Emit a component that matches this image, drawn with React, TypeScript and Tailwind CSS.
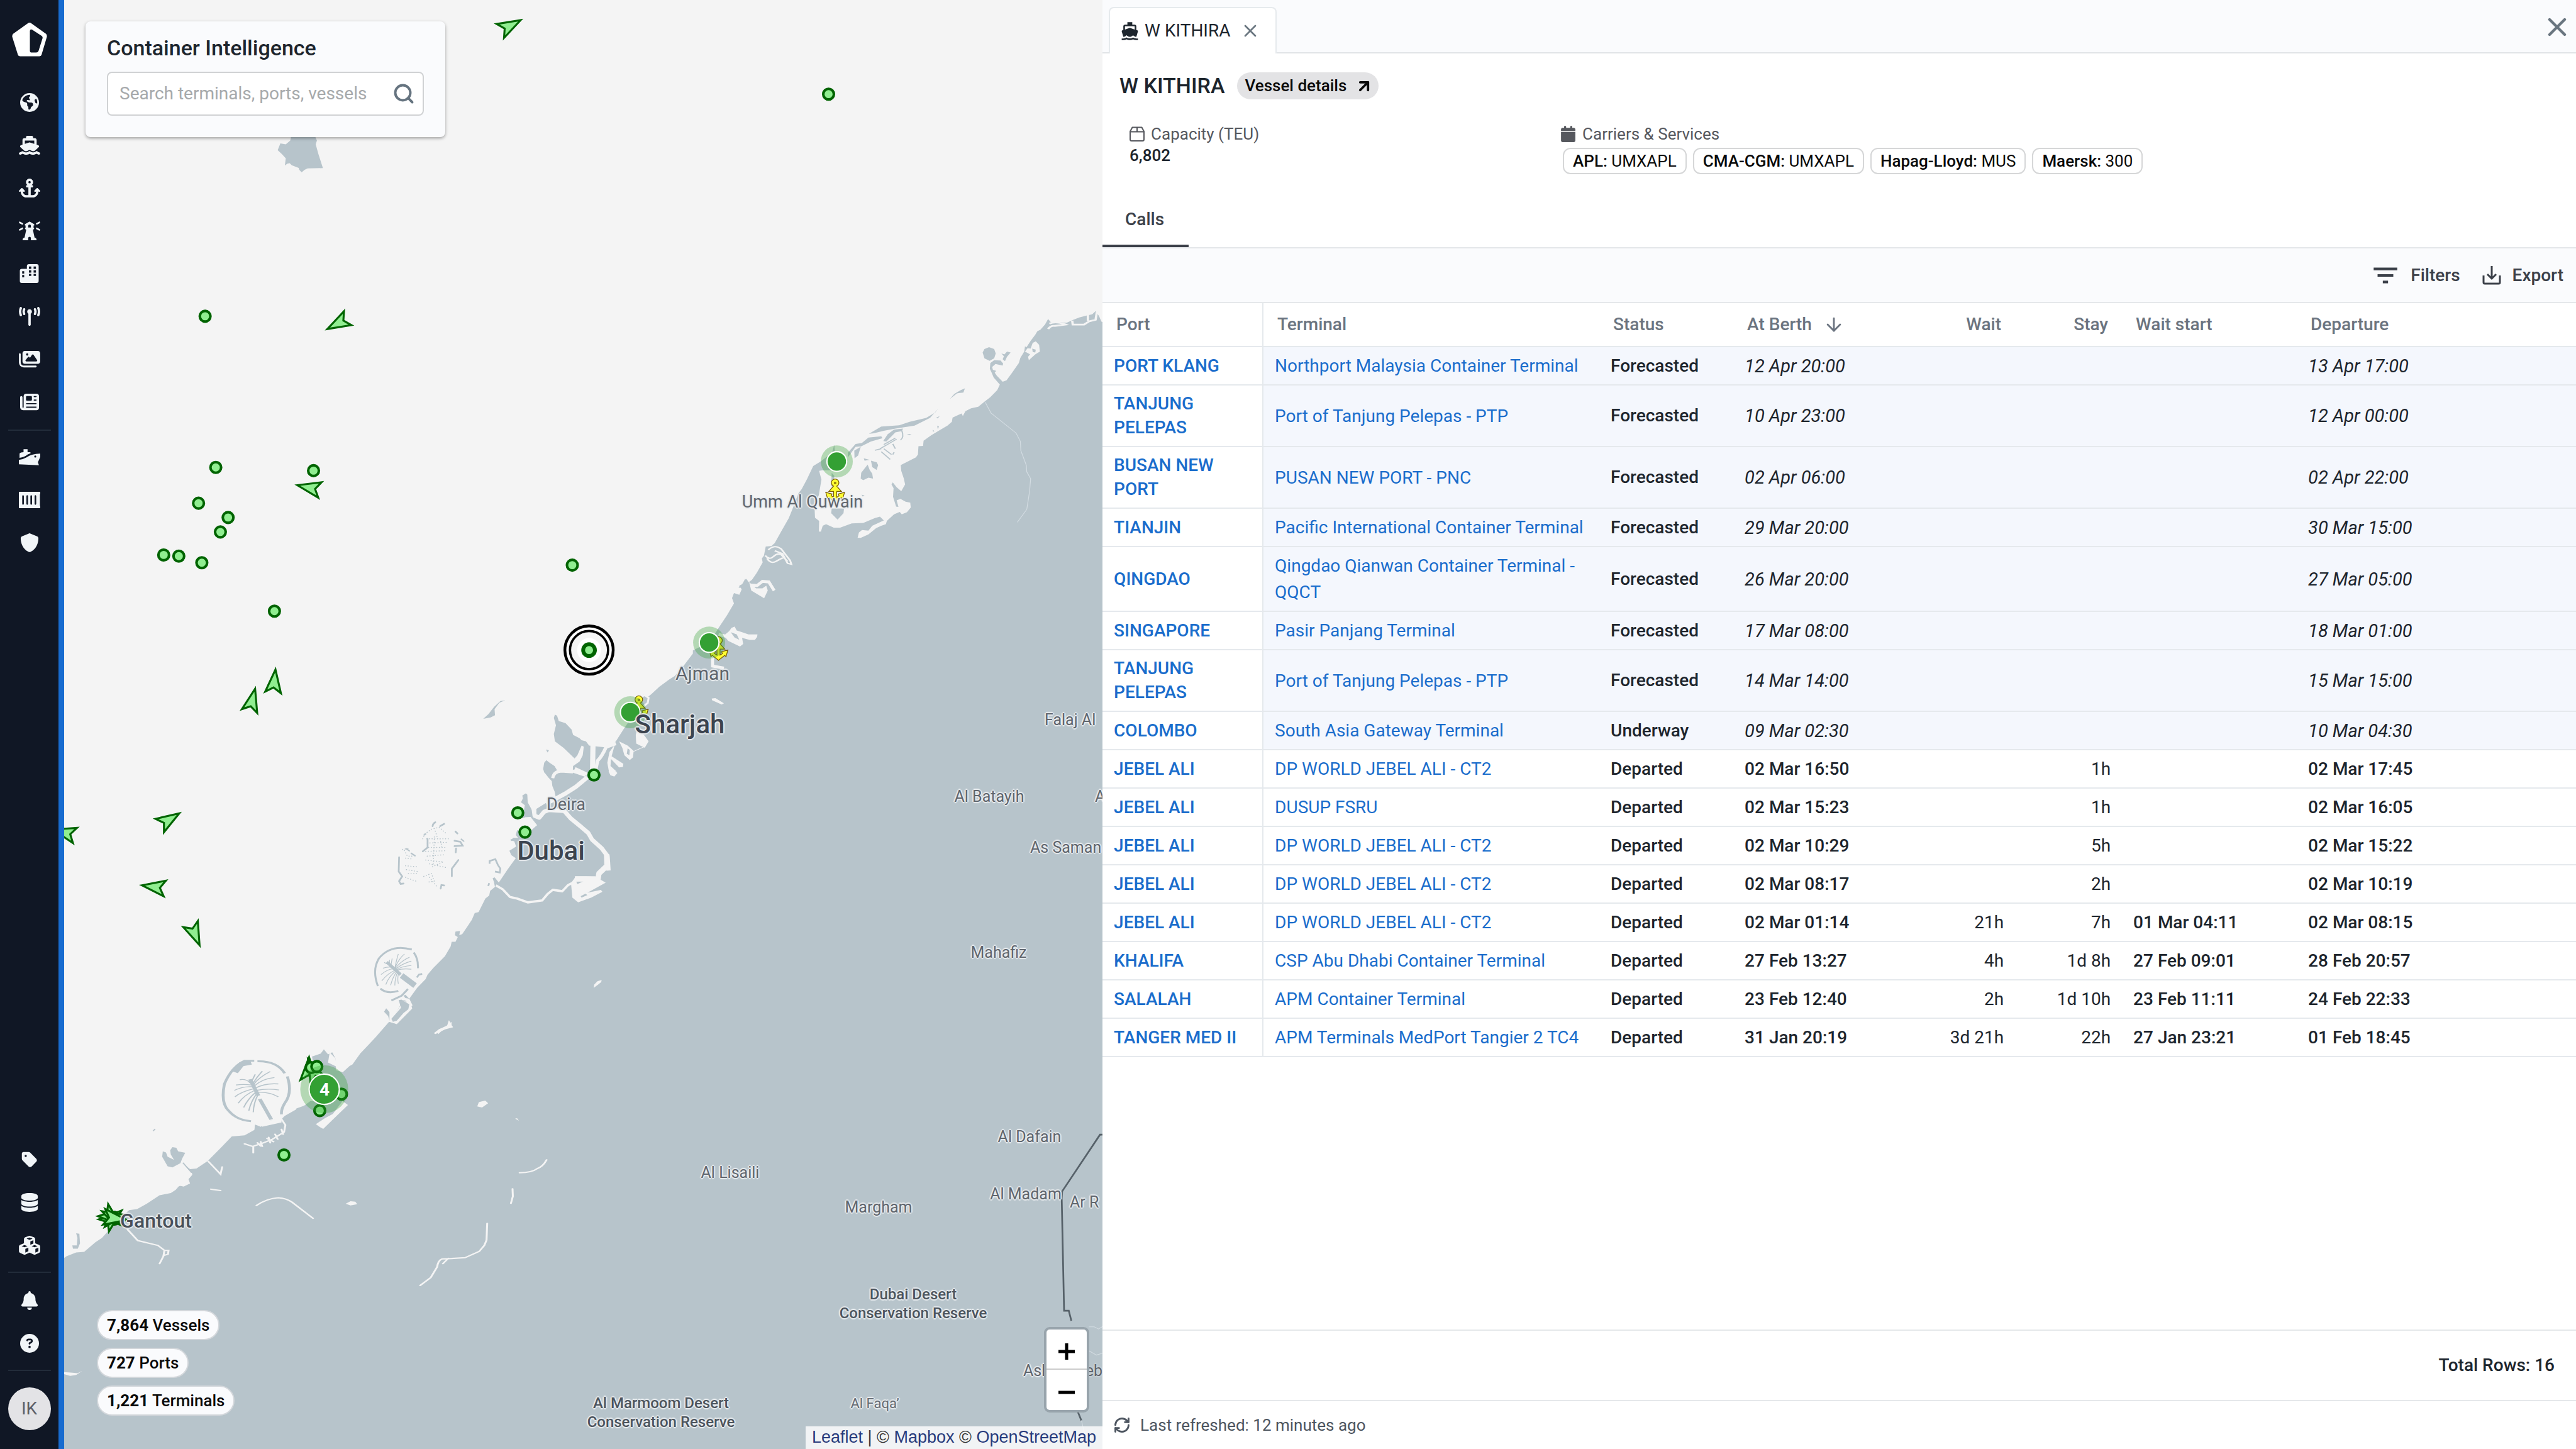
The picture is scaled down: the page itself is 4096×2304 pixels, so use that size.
import { useState } from 'react'
import { ArrowDown, ArrowUpRight, RefreshCw, Search, X } from 'lucide-react'
import {
  FaAnchor,
  FaBell,
  FaCalendar,
  FaCircleQuestion,
  FaCubes,
  FaDatabase,
  FaEarthAmericas,
  FaImages,
  FaNewspaper,
  FaShield,
  FaShip,
  FaTag,
  FaTowerBroadcast,
} from 'react-icons/fa6'
import { MdDirectionsBoat, MdFilterList } from 'react-icons/md'

type Call = {
  port: string
  terminal: string
  status: 'Forecasted' | 'Underway' | 'Departed'
  berth: string
  wait?: string
  stay?: string
  waitStart?: string
  departure: string
}

const calls: Call[] = [
  { port: 'PORT KLANG', terminal: 'Northport Malaysia Container Terminal', status: 'Forecasted', berth: '12 Apr 20:00', departure: '13 Apr 17:00' },
  { port: 'TANJUNG PELEPAS', terminal: 'Port of Tanjung Pelepas - PTP', status: 'Forecasted', berth: '10 Apr 23:00', departure: '12 Apr 00:00' },
  { port: 'BUSAN NEW PORT', terminal: 'PUSAN NEW PORT - PNC', status: 'Forecasted', berth: '02 Apr 06:00', departure: '02 Apr 22:00' },
  { port: 'TIANJIN', terminal: 'Pacific International Container Terminal', status: 'Forecasted', berth: '29 Mar 20:00', departure: '30 Mar 15:00' },
  { port: 'QINGDAO', terminal: 'Qingdao Qianwan Container Terminal - QQCT', status: 'Forecasted', berth: '26 Mar 20:00', departure: '27 Mar 05:00' },
  { port: 'SINGAPORE', terminal: 'Pasir Panjang Terminal', status: 'Forecasted', berth: '17 Mar 08:00', departure: '18 Mar 01:00' },
  { port: 'TANJUNG PELEPAS', terminal: 'Port of Tanjung Pelepas - PTP', status: 'Forecasted', berth: '14 Mar 14:00', departure: '15 Mar 15:00' },
  { port: 'COLOMBO', terminal: 'South Asia Gateway Terminal', status: 'Underway', berth: '09 Mar 02:30', departure: '10 Mar 04:30' },
  { port: 'JEBEL ALI', terminal: 'DP WORLD JEBEL ALI - CT2', status: 'Departed', berth: '02 Mar 16:50', stay: '1h', departure: '02 Mar 17:45' },
  { port: 'JEBEL ALI', terminal: 'DUSUP FSRU', status: 'Departed', berth: '02 Mar 15:23', stay: '1h', departure: '02 Mar 16:05' },
  { port: 'JEBEL ALI', terminal: 'DP WORLD JEBEL ALI - CT2', status: 'Departed', berth: '02 Mar 10:29', stay: '5h', departure: '02 Mar 15:22' },
  { port: 'JEBEL ALI', terminal: 'DP WORLD JEBEL ALI - CT2', status: 'Departed', berth: '02 Mar 08:17', stay: '2h', departure: '02 Mar 10:19' },
  { port: 'JEBEL ALI', terminal: 'DP WORLD JEBEL ALI - CT2', status: 'Departed', berth: '02 Mar 01:14', wait: '21h', stay: '7h', waitStart: '01 Mar 04:11', departure: '02 Mar 08:15' },
  { port: 'KHALIFA', terminal: 'CSP Abu Dhabi Container Terminal', status: 'Departed', berth: '27 Feb 13:27', wait: '4h', stay: '1d 8h', waitStart: '27 Feb 09:01', departure: '28 Feb 20:57' },
  { port: 'SALALAH', terminal: 'APM Container Terminal', status: 'Departed', berth: '23 Feb 12:40', wait: '2h', stay: '1d 10h', waitStart: '23 Feb 11:11', departure: '24 Feb 22:33' },
  { port: 'TANGER MED II', terminal: 'APM Terminals MedPort Tangier 2 TC4', status: 'Departed', berth: '31 Jan 20:19', wait: '3d 21h', stay: '22h', waitStart: '27 Jan 23:21', departure: '01 Feb 18:45' },
]

const services = [
  { carrier: 'APL', code: 'UMXAPL' },
  { carrier: 'CMA-CGM', code: 'UMXAPL' },
  { carrier: 'Hapag-Lloyd', code: 'MUS' },
  { carrier: 'Maersk', code: '300' },
]

const totals = [
  { count: '7,864', label: 'Vessels' },
  { count: '727', label: 'Ports' },
  { count: '1,221', label: 'Terminals' },
]

/* ---------- icons ---------- */

function Logo() {
  return (
    <svg viewBox="0 0 106 102" className="h-[54px] w-[56px]" aria-hidden="true">
      <path
        fill="#fff"
        fillRule="evenodd"
        d="M48 2Q53 -2 58 2L103 34Q106 38 105 43L89 97Q88 101 83 101H24Q19 101 18 97L1 43Q0 38 3 34ZM54 25Q54 18 61 21L90 40Q93 43 92 47L80 85Q78 90 73 90H60Q54 90 54 84Z"
      />
    </svg>
  )
}

function LighthouseIcon() {
  return (
    <svg viewBox="0 0 64 56" className="h-[30px] w-[34px]" aria-hidden="true">
      <path
        fill="currentColor"
        fillRule="evenodd"
        d="M32 0L46 8V12H44V19L46 22L42 25L47 48Q53 49 53 56H36V50Q36 46 32 46T28 50V56H11Q11 49 17 48L22 25L18 22L20 19V12H18V8ZM32 9Q28 9 28 13V18H36V13Q36 9 32 9Z"
      />
      <g stroke="currentColor" strokeWidth="5">
        <path d="M1 2L12 8M1 26L12 20M63 2L52 8M63 26L52 20" />
      </g>
    </svg>
  )
}

function BuildingsIcon() {
  return (
    <svg viewBox="0 0 58 56" className="h-[30px] w-[31px]" aria-hidden="true">
      <path
        fill="currentColor"
        fillRule="evenodd"
        d="M22 6Q22 0 28 0H51Q57 0 57 6V50Q57 56 51 56H7Q1 56 1 50V20Q1 14 7 14H22ZM8 21V28H14V21ZM8 32V39H14V32ZM28 7V14H35V7ZM42 7V14H49V7ZM28 18V25H35V18ZM42 18V25H49V18ZM28 29V35H35V29ZM42 29V35H49V29Z"
      />
    </svg>
  )
}

function CargoShipIcon() {
  return (
    <svg viewBox="0 0 64 48" className="h-[26px] w-[34px]" aria-hidden="true">
      <path fill="currentColor" d="M2 26V13Q5 9 14 9V0H26V9H33Q36 9 35 12L26 16Q16 24 2 26Z" />
      <path
        fill="currentColor"
        fillRule="evenodd"
        d="M0 32Q14 30 24 24Q36 14 64 13V23L57 39L60 48L0 45ZM49 19A3 3 0 1 0 49.1 25A3 3 0 1 0 49 19Z"
      />
    </svg>
  )
}

function ContainerIcon() {
  return (
    <svg viewBox="0 0 64 49" className="h-[26px] w-[34px]" aria-hidden="true">
      <path
        fill="currentColor"
        fillRule="evenodd"
        d="M0 0H64V7H63V42H64V49H0ZM10 12V37L12.500 39L15 37V12L12.500 10ZM22.500 12V37L25 39L27.500 37V12L25 10ZM34.500 12V37L37 39L39.500 37V12L37 10ZM47 12V37L49.500 39L52 37V12L49.500 10Z"
      />
    </svg>
  )
}

function BoxIcon() {
  return (
    <svg viewBox="0 0 24 24" className="h-6 w-6" fill="none" stroke="currentColor" strokeWidth="2" strokeLinejoin="round" aria-hidden="true">
      <path d="M1 8L4.500 1.500H19.500L23 8V20.500Q23 23 20.500 23H3.500Q1 23 1 20.500ZM1 8.500H23M12 1.500V8" />
    </svg>
  )
}

function ExportIcon() {
  return (
    <svg viewBox="0 0 30 30" className="h-[30px] w-[30px]" fill="none" stroke="currentColor" strokeWidth="3" aria-hidden="true">
      <path d="M2 15V26Q2 28 4 28H26Q28 28 28 26V15M15 0V20M8 13L15 20L22 13" />
    </svg>
  )
}

const navTop = [
  { label: 'World', icon: <FaEarthAmericas className="h-[30px] w-[30px]" /> },
  { label: 'Vessels', icon: <FaShip className="h-[30px] w-[34px]" /> },
  { label: 'Anchorages', icon: <FaAnchor className="h-[30px] w-[34px]" /> },
  { label: 'Lighthouses', icon: <LighthouseIcon /> },
  { label: 'Companies', icon: <BuildingsIcon /> },
  { label: 'Signals', icon: <FaTowerBroadcast className="h-[30px] w-[34px]" /> },
  { label: 'Imagery', icon: <FaImages className="h-[30px] w-[34px]" /> },
  { label: 'News', icon: <FaNewspaper className="h-[30px] w-[30px]" /> },
]

const navMiddle = [
  { label: 'Cargo', icon: <CargoShipIcon /> },
  { label: 'Containers', icon: <ContainerIcon /> },
  { label: 'Risk', icon: <FaShield className="h-[30px] w-[30px]" /> },
]

const navData = [
  { label: 'Tags', icon: <FaTag className="h-[28px] w-[28px]" /> },
  { label: 'Data', icon: <FaDatabase className="h-[30px] w-[28px]" /> },
  { label: 'Modules', icon: <FaCubes className="h-[30px] w-[34px]" /> },
]

const navHelp = [
  { label: 'Notifications', icon: <FaBell className="h-[30px] w-[28px]" /> },
  { label: 'Help', icon: <FaCircleQuestion className="h-[30px] w-[30px]" /> },
]

function NavGroup({ items }: { items: { label: string; icon: React.ReactNode }[] }) {
  return (
    <ul>
      {items.map((item) => (
        <li key={item.label}>
          <button type="button" aria-label={item.label} className="flex h-[68px] w-[68px] items-center justify-center">
            {item.icon}
          </button>
        </li>
      ))}
    </ul>
  )
}

function Sidebar() {
  return (
    <nav className="flex w-[102px] shrink-0 flex-col items-center border-r-[9px] border-[#176bcf] bg-[#101725] pt-9 pb-[30px] text-[#f1f5f8]">
      <Logo />
      <div className="mt-[39px]">
        <NavGroup items={navTop} />
      </div>
      <hr className="mt-[10px] mb-2 w-[68px] border-t-2 border-[#222c3a]" />
      <NavGroup items={navMiddle} />
      <div className="mt-auto">
        <NavGroup items={navData} />
      </div>
      <hr className="mt-2 mb-[10px] w-[68px] border-t-2 border-[#222c3a]" />
      <NavGroup items={navHelp} />
      <hr className="mt-2 mb-[26px] w-[68px] border-t-2 border-[#222c3a]" />
      <button type="button" className="flex h-[68px] w-[68px] items-center justify-center rounded-full bg-[#e3e3e6] text-[28px] text-[#5d5f68]">
        IK
      </button>
    </nav>
  )
}

/* ---------- map ---------- */

const LAND = '#b7c4cb'
const SEA = '#f4f4f4'

const vessels = [
  [504.5, 57.3], [125, 192.5], [131.5, 284.5], [191, 286.5], [121, 306.3], [139, 315], [134.3, 323.8],
  [99.8, 337.8], [109, 338.5], [123, 342.5], [348.5, 344], [167.2, 372], [361.7, 471.7], [315.3, 494.8],
  [319.7, 506.5], [194.8, 676], [208, 666], [173, 703],
]

// x, y, heading
const moving = [
  [310, 16, 62], [206.5, 196.5, 242], [189, 297, 282], [167, 415.5, 6], [153.5, 427, 14], [102.5, 499.3, 58],
  [94.5, 540, 278], [118.5, 568, 157], [40, 507, 285],
  [188, 651.5, 2], [191, 652, 335], [68, 742, 50], [67.5, 740.5, 130], [69, 741, 80], [69.5, 741.5, 98],
]

const clusters = [
  [509.5, 280.9],
  [431.8, 391.1],
  [383.8, 433.5],
]

const DART = 'M0 -8L4.8 6L0 3L-4.8 6Z'
const ANCHOR =
  'M-1 -2.200A2.400 2.400 0 1 1 1 -2.200L4 1.200H1V5L2.500 4L2 2.800L6 1.800L4.800 6L4 5.200L0 8.400L-4 5.200L-4.800 6L-6 1.800L-2 2.800L-2.500 4L-1 5V1.200H-4Z'

function Coastline() {
  return (
    <svg
      viewBox="192 0 3096 4320"
      preserveAspectRatio="xMinYMin slice"
      className="absolute inset-0 h-full w-full"
      aria-hidden="true"
    >
      {/* island behind the search card */}
      <g transform="scale(.8929 .574)">
        <path fill={LAND} d="M975 690L1048 690L1059 730L1055 750L1064 800L1079 873L1028 875L1018 882L1008 895L1000 882L998 872L975 858L968 848L960 850L952 860L955 822L942 800L928 780L937 745L955 750L970 730Z" />
      </g>

      {/* Ras Al Khaimah to Al Hamriyah */}
      <g transform="translate(2100 850) scale(.7653 .574)">
        <path
          fill={LAND}
          d="M1568 200L1548 190L1538 160L1525 135L1512 152L1490 158L1462 168L1438 180L1412 196L1372 192L1350 192L1340 176L1328 205L1310 232L1298 240L1290 258L1272 290L1256 322L1250 318L1247 345L1232 378L1226 405L1200 455L1178 495L1163 502L1140 470L1132 455L1138 446L1125 440L1122 425L1135 410L1163 418L1165 408L1155 392L1130 390L1115 405L1113 435L1120 455L1128 480L1152 517L1142 545L1115 582L1092 606L1068 632L1040 640L1018 655L1008 680L1003 667L968 688L965 710L948 730L925 748L885 780L855 808L853 835L835 837L833 880L825 895L766 935L768 965L778 1005L783 1035L768 1070L750 1050L735 1025L730 1035L738 1055L736 1100L748 1150L757 1152L750 1118L765 1110L785 1125L803 1130L805 1155L790 1180L770 1190L762 1178L740 1190L712 1225L708 1242L690 1250L670 1262L640 1295L610 1313L598 1312L603 1285L615 1272L640 1275L655 1250L700 1222L685 1203L665 1210L620 1235L575 1238L530 1260L505 1260L475 1242L462 1250L455 1280L447 1280L448 1225L432 1208L430 1150L447 1090L457 1010L448 965L460 962L510 962L510 870L507 830L498 870L455 915L425 940L400 1010L380 1060L368 1080L345 1160L330 1210L300 1280L275 1340L262 1355L240 1358L233 1405L225 1420L228 1440L205 1495L187 1530L172 1545L160 1525L150 1550L135 1568L135 1572L1568 1572Z"
        />
        <g fill={LAND}>
          <path d="M1085 350L1092 332L1110 322L1130 332L1136 355L1130 380L1112 393L1092 380ZM1158 355L1170 360L1180 345L1194 350L1180 372L1172 395L1163 385L1168 370Z" />
          <path d="M957 592L975 565L1000 545L1016 536L1010 558L985 562ZM912 642L900 662L865 690L800 710L760 728L690 735L642 772L660 770L700 757L745 745L820 730L880 690Z" />
          <path d="M690 785L640 792L615 820L590 825L560 870L560 895L590 840L612 838L650 812L695 795ZM610 840L585 860L586 900L600 885ZM775 745L740 750L715 775L698 810L710 812L745 765L770 758Z" />
          <path d="M637 932L612 975L610 1005L620 1013L640 1000L658 1005L655 980L645 960ZM650 912L672 920L678 935L672 960L655 945ZM622 900L645 908L625 912ZM497 975L507 990L505 1060L495 1040ZM497 1160L545 1160L543 1185L520 1218L495 1185Z" />
          <path d="M613 1088L625 1092L618 1098ZM903 690L918 680L910 692ZM908 730L915 735L910 748ZM790 773L808 775L800 780ZM890 750L897 758L892 762Z" />
        </g>
        <path fill="none" stroke={LAND} strokeWidth="5" d="M700 828L745 795M685 850L750 800M700 850L730 880M690 865L725 905M735 825L745 850M740 868L735 880M665 858L690 850M770 755Q780 790 765 805" />
        <path fill="none" stroke={SEA} strokeWidth="9" d="M1345 200Q1370 185 1408 205L1365 212Q1350 210 1340 228M1434 185L1436 205L1480 205L1500 188L1525 180L1530 140M1495 155V185" />
        <path fill={SEA} fillRule="evenodd" d="M1280 300L1292 292L1305 310L1308 345L1290 360L1265 390L1262 372L1270 360L1250 345L1260 328L1272 330ZM1278 330L1292 335L1290 350L1280 348Z" />
        <path fill="none" stroke={SEA} strokeWidth="7" d="M250 1375Q275 1345 300 1370L335 1430L340 1450L325 1445L305 1395L275 1380M238 1405Q255 1430 270 1410T300 1400L325 1435M245 1420Q260 1450 280 1435T310 1415" />
        <path fill="none" stroke="#d3dce2" strokeWidth="3" d="M1095 608L1118 665L1215 768L1232 812L1234 860L1255 935L1257 970L1272 1005L1268 1070L1257 1165L1220 1232" />
      </g>

      {/* Ajman and Sharjah */}
      <g transform="translate(1400 1700) scale(.6378)">
        <path
          fill={LAND}
          d="M1353 0L1322 45L1308 60L1295 40L1280 68L1262 70L1273 90L1262 115L1237 107L1228 130L1237 155L1205 210L1165 270L1125 335L1045 375L1045 390L1003 445L960 495L935 510L888 545L850 580L835 592L820 580L795 590L770 640L750 700L720 745L685 800L660 822L635 828L605 825L560 820L545 800L525 795L515 785L485 770L478 745L450 715L435 710L418 705L410 680L400 675L395 690L405 725L395 765L400 800L440 830L492 880L505 865L525 820L535 825L530 865L515 895L485 915L483 945L465 950L440 940L410 935L398 915L375 900L360 888L350 900L345 930L351 946L2960 946L2960 0Z"
        />
        <path fill={LAND} d="M168 608L145 612L115 640L90 672L65 695L100 688L120 678L118 650L140 620ZM358 838L372 842L366 852Z" />
        <g fill={SEA}>
          <path d="M1308 55L1318 95L1378 131L1395 95L1388 72L1370 85L1340 85Z" />
          <path fillRule="evenodd" d="M1190 305L1215 285L1225 270L1240 263L1250 282L1275 290L1305 300L1347 300L1345 312L1335 326L1310 326L1275 316L1280 345L1265 357L1210 330ZM1222 290L1250 300L1262 325L1240 315Z" />
          <path d="M1133 600L1150 598L1190 622L1180 628L1135 608ZM785 740L820 775L838 800L820 830L780 810L778 770Z" />
          <path fillRule="evenodd" d="M700 800L740 820L768 845L765 875L750 887L725 865L715 830ZM740 832L736 858L748 865L750 840Z" />
          <path fillRule="evenodd" d="M680 815L665 870L720 905L718 920L700 922L662 882L660 915L692 945L680 965L655 955L645 900L655 850Z" />
        </g>
        <g fill="none" stroke={SEA}>
          <path strokeWidth="14" d="M1315 70L1345 72L1370 52L1400 55L1425 95M1165 300L1205 310M1137 400V448L1190 458" />
          <path strokeWidth="9" d="M800 592L820 584L838 597L834 620L815 636" />
          <path strokeWidth="3" d="M766 848L820 824" />
          <path strokeWidth="24" d="M578 815L576 930" />
          <path strokeWidth="16" d="M640 825Q620 870 600 890L590 935M685 810L630 830M500 938L560 965" />
        </g>
      </g>

      {/* Dubai */}
      <g transform="translate(1000 2300) scale(.574)">
        <path
          fill={LAND}
          d="M1083 0L1108 32L1125 50L1128 75L1140 105L1145 130L1120 150L1100 160L1045 195L1045 212L1030 220L1022 200L1000 160L998 120L990 114L972 125L975 140L965 160L985 175L980 205L960 240L1015 240L1048 280L1020 300L990 320L945 305L938 330L950 345L925 345L912 360L930 362L940 390L905 412L915 435L938 450L895 510L850 577L828 550L818 555L825 575L830 600L805 620L800 645L780 660L765 690L745 730L725 735L710 770L685 808L660 845L645 850L648 828L625 832L622 850L637 860L625 885L605 885L600 908L570 960L510 1020L480 1055L470 1078L425 1125L385 1180L365 1160L355 1165L375 1190L340 1187L338 1215L300 1280L318 1310L280 1300L210 1380L178 1415L130 1465L90 1522L75 1530L40 1562L30 1568L4000 1568L4000 0Z"
        />
        <g fill="none" stroke={SEA} strokeLinejoin="round">
          <path strokeWidth="22" d="M1310 30L1250 80L1200 112L1140 145L1095 165" />
          <path strokeWidth="16" d="M1130 35Q1135 0 1175 -2L1235 2M1180 -20L1300 20M1245 -15L1310 15" />
          <path strokeWidth="22" d="M1028 170L1036 230L1060 240L1085 210L1110 200L1190 205L1225 245L1280 290L1315 320L1335 355L1385 400L1415 440L1420 515" />
          <path strokeWidth="28" d="M1410 430L1412 490L1370 530L1365 560L1300 558L1245 558" />
          <path strokeWidth="12" d="M835 592L870 612L908 652L945 660L1000 680L1075 670L1105 635L1130 615L1180 622L1210 590L1240 575" />
        </g>
        <g fill={SEA}>
          <path d="M985 238L1015 236L1048 278L1020 305L990 290Z" />
          <path fillRule="evenodd" d="M1225 580L1250 545L1350 545L1405 578L1310 630L1380 615L1388 625L1330 655L1262 680L1232 655ZM1252 572L1290 570L1258 585ZM1275 648L1300 635L1310 642L1280 655Z" />
          <path d="M1343 1124L1345 1108L1362 1090L1384 1083L1382 1094L1365 1108ZM590 1293L598 1305L604 1300L605 1320L613 1328L590 1330L555 1345L535 1365L532 1355L512 1360L540 1338L580 1325Z" />
          <path d="M1420 0L1440 -12L1466 8L1450 26L1430 20ZM285 1280L300 1290L395 1212L400 1232L320 1313L285 1300Z" />
        </g>
        <path fill={SEA} d="M345 1185L372 1198L350 1175L385 1180L402 1215L345 1262L320 1290L292 1300L298 1275L340 1215Z" />
        <path fill={LAND} d="M330 1188L345 1185L385 1210L380 1235L355 1255L320 1295L300 1300L292 1285L342 1228ZM265 1230L282 1250L282 1295L275 1270L254 1248Z" />
        <path fill="none" stroke={LAND} strokeWidth="9" d="M802 480L802 465L832 456L845 485L858 505L855 525L830 520M795 595L800 580M912 358L930 350L948 368M424 1070L435 1055L452 1052" />
        {/* Palm Jumeirah */}
        <g fill="none" stroke={LAND}>
          <path strokeWidth="10" d="M222 1115Q190 1030 228 970Q290 895 398 925M408 940Q432 970 430 1022M235 1128Q270 1158 328 1140M378 1130L345 1165L292 1190" />
          <path strokeWidth="16" d="M268 990L340 1055" />
          <path strokeWidth="30" d="M345 1060L415 1112" />
          <path
            strokeWidth="4"
            d="M310 1022Q318 980 328 948M310 1022Q328 975 360 948M312 1024Q340 985 386 965M315 1026Q345 1000 396 985M318 1030Q350 1010 396 1008M320 1032Q350 1022 396 1027M290 1005L296 972M282 998L282 978M312 1022Q285 1010 248 1022M315 1026Q280 1020 238 1055M318 1030Q275 1045 242 1088M320 1033Q280 1060 263 1107M322 1036Q300 1065 288 1110M326 1040Q310 1070 310 1112M330 1045Q322 1075 328 1102M270 1000L255 992"
          />
        </g>
        {/* The World */}
        <g fill="none" stroke={LAND} strokeLinecap="round">
          <path strokeWidth="5" strokeDasharray="1 13" d="M455 350L465 325L500 300L540 290L580 325M475 350H590M478 372L585 368M485 395H580M470 415L570 412M478 440L575 432M470 460L560 470M490 480L580 500M505 495L560 470M460 545L500 530L515 570L480 575M490 550L530 600M360 410L375 440L410 440M365 450L400 455M365 490L425 495M370 510L430 520M380 530L425 530M365 550L420 570M350 405L380 400M520 310L530 340M545 350L555 395M515 340L510 480" />
          <path strokeWidth="9" d="M520 264Q508 270 506 284M545 284L566 272M332 446L330 520L348 545L332 570L340 584L355 582M606 544V505L625 480L640 460M620 360L650 365L662 385L620 388M628 400L626 420M548 608L552 590L566 592M625 312L635 322M480 350V395L455 415" />
          <path strokeWidth="7" d="M370 402L385 412M395 425L415 438M470 325L462 330M655 352L668 362" />
        </g>
      </g>

      {/* Jebel Ali to Ghantoot */}
      <g transform="translate(180 2900) scale(.9566 .6378)">
        <path
          fill={LAND}
          d="M885 468L860 455L858 400L848 372L835 382L822 358L812 378L785 392L790 430L800 600L780 600L760 622L735 635L705 660L690 685L655 690L625 720L608 700L605 735L575 760L535 765L500 820L460 880L425 915L405 918L380 888L412 940L385 990L370 998L360 1015L345 1030L310 1040L270 1080L240 1105L215 1110L185 1150L130 1240L110 1260L75 1305L50 1308L20 1325L0 1348L0 2300L3300 2300L3300 468Z"
        />
        <path fill={LAND} d="M350 815L362 818L368 835L390 842L380 870L375 890L350 910L335 905L318 860L320 835L330 840L335 860L355 875L345 850L343 830ZM50 1218L60 1220L62 1265L55 1290L40 1290L38 1275L52 1275L54 1240Z" />
        <path fill={SEA} d="M880 600L897 618L820 730L810 722L797 708L825 680L850 660ZM840 372L858 400L862 440L835 420ZM608 700L655 690L690 680L690 700L630 720ZM550 755L605 735L607 708L580 700Z" />
        <path fill={SEA} d="M655 690L690 678L735 640L745 600L640 600L620 640L590 700L625 720Z" />
        {/* Palm Jebel Ali */}
        <g fill="none" stroke={LAND}>
          <path strokeWidth="9" d="M605 412L575 412Q535 440 512 520Q500 610 525 645Q550 690 595 694M615 414Q675 412 700 470M708 485Q725 560 700 610Q688 640 690 662" />
          <path strokeWidth="20" d="M595 420L565 428L545 465" />
          <path strokeWidth="12" d="M592 498L618 575M622 590L658 686" />
          <path
            strokeWidth="4"
            d="M600 520Q612 490 630 460M602 525Q618 490 655 462M605 530Q630 495 668 490M608 540Q640 515 680 520M611 550Q645 540 682 548M614 560Q650 555 680 580M598 505L608 475M592 515Q580 495 560 500M597 525Q570 520 548 525M600 533Q570 530 543 550M604 542Q565 555 545 580M607 550Q575 570 555 610M610 558Q585 590 572 630M613 565Q595 600 588 645M616 572Q603 610 602 652"
          />
        </g>
        <g fill="none" stroke={SEA} strokeWidth="6" strokeLinecap="round">
          <path d="M688 680L702 712L698 745L660 780L625 800L600 812L575 800M602 815V842M690 732L695 755M670 755L678 778M650 770L655 795M625 790L630 812M645 775L665 790M615 795L625 810" />
          <path d="M462 882L500 942L505 908M470 1012L500 1018M612 1088Q645 1055 680 1052Q705 1055 722 1072L788 1148M210 1200L242 1252L305 1275L325 1298L322 1325L310 1360M325 1298L338 1298L336 1316L322 1322" />
          <path d="M1432 935Q1470 935 1488 915Q1505 905 1516 875M1410 1010L1411 1045L1405 1078M1331 1172L1329 1250L1322 1275L1306 1303L1262 1332L1220 1336L1190 1338Q1178 1345 1175 1375L1155 1425L1122 1462M1210 1335L1193 1360" />
        </g>
        <path fill={SEA} d="M1300 625L1305 605L1325 598L1334 610L1315 630ZM890 1080L905 1068L920 1070L926 1082L905 1088ZM1418 682L1424 680L1430 692ZM380 950L410 935L412 945L400 965L405 985L385 1000L372 995ZM1212 222L1218 240L1224 255L1200 265L1170 287L1165 283L1185 262L1208 245Z" />
        <path fill="none" stroke={LAND} strokeWidth="4" d="M290 740L296 730M383 888L410 935" />
      </g>
      <path fill={SEA} d="M192 4091L212 4092L232 4094L246 4087L228 4099L210 4102L192 4097Z" />

      {/* emirate border */}
      <g transform="translate(2300 3300) scale(.6378)" fill="none" stroke="#566169" strokeWidth="8">
        <path d="M1560 130H1537L1360 395L1358 430L1369 953H1391L1403 1000M1431 1380V1420L1450 1466" />
        <path stroke="#d3dce2" strokeWidth="3" d="M1450 1466L1466 1530V1568M1485 1028H1510L1530 1038L1560 1020M1485 1140L1520 1160L1560 1148" />
      </g>

      {/* vessels and port clusters */}
      <g transform="scale(4.898)">
        <g fill="#ffff33" stroke="#7a5c00" strokeWidth=".5">
          <g transform="translate(508.500 298)"><path d={ANCHOR} transform="scale(.95)" /><circle cy="-4" r=".5" /></g>
          <g transform="translate(437.500 394)"><path d={ANCHOR} transform="scale(.95)" /><circle cy="-4" r=".5" /></g>
          <g transform="translate(389 430)"><path d={ANCHOR} transform="scale(.95)" /><circle cy="-4" r=".5" /></g>
        </g>
        <circle cx="69.500" cy="741.500" r="4.600" fill="#006400" />
        <g fill="#90ee90" stroke="#006400">
          {moving.map(([x, y, heading]) => (
            <path key={`${x}-${y}`} d={DART} strokeWidth="1.200" transform={`translate(${x} ${y}) rotate(${heading})`} />
          ))}
          {vessels.map(([x, y]) => (
            <circle key={`${x}-${y}`} cx={x} cy={y} r="3.250" strokeWidth="1.570" />
          ))}
          <circle cx="189.500" cy="649.800" r="3.250" strokeWidth="1.570" />
          <circle cx="193" cy="649.200" r="3.250" strokeWidth="1.570" />
        </g>
        {clusters.map(([x, y]) => (
          <g key={x}>
            <circle cx={x} cy={y} r="9.750" fill="#33a033" fillOpacity=".33" />
            <circle cx={x} cy={y} r="6" fill="#33a033" stroke="#fff" strokeWidth=".8" />
          </g>
        ))}
        <circle cx="197.500" cy="663" r="14.600" fill="#33a033" fillOpacity=".33" />
        <circle cx="197.500" cy="663" r="9.200" fill="#33a033" stroke="#fff" strokeWidth=".8" />

        {/* selected vessel */}
        <g fill="none" stroke="#000">
          <circle cx="358.700" cy="395.700" r="13.500" stroke="#fff" strokeWidth="3" />
          <circle cx="358.700" cy="395.700" r="14.700" strokeWidth="1.700" />
          <circle cx="358.700" cy="395.700" r="11.600" strokeWidth="1.400" />
          <circle cx="358.700" cy="395.700" r="7.300" fill="#fff" stroke="none" />
          <circle cx="358.700" cy="395.700" r="3.600" fill="#90ee90" stroke="#006400" strokeWidth="2.300" />
        </g>
      </g>
    </svg>
  )
}

const placeKinds = {
  city: 'text-[42px] font-medium text-[#3c444f] -translate-x-1/2',
  town: 'text-[32px] font-medium text-[#48505a] -translate-x-1/2',
  suburb: 'text-[30px] text-[#5f656d] -translate-x-1/2',
  district: 'text-[27px] text-[#5f656d] -translate-x-1/2',
  village: 'text-[25px] text-[#5f656d] -translate-x-1/2',
  edge: 'text-[25px] text-[#5f656d]',
  hamlet: 'text-[22px] text-[#666c74] -translate-x-1/2',
  reserve: 'text-[24px] font-medium text-[#4c545d] -translate-x-1/2',
}

const places: { name: string; kind: keyof typeof placeKinds; x: number; y: number }[] = [
  { name: 'Umm Al Quwain', kind: 'district', x: 1174, y: 798 },
  { name: 'Ajman', kind: 'suburb', x: 1015, y: 1071 },
  { name: 'Sharjah', kind: 'city', x: 979, y: 1152 },
  { name: 'Deira', kind: 'district', x: 798, y: 1279 },
  { name: 'Dubai', kind: 'city', x: 774, y: 1353 },
  { name: 'Gantout', kind: 'town', x: 146, y: 1941 },
  { name: 'Falaj Al', kind: 'edge', x: 1559, y: 1145 },
  { name: 'Al Batayih', kind: 'village', x: 1471, y: 1267 },
  { name: 'A', kind: 'edge', x: 1639, y: 1267 },
  { name: 'As Saman', kind: 'edge', x: 1536, y: 1348 },
  { name: 'Mahafiz', kind: 'village', x: 1486, y: 1515 },
  { name: 'Al Dafain', kind: 'village', x: 1535, y: 1808 },
  { name: 'Al Madam', kind: 'village', x: 1529, y: 1899 },
  { name: 'Ar R', kind: 'edge', x: 1599, y: 1912 },
  { name: 'Al Lisaili', kind: 'village', x: 1059, y: 1865 },
  { name: 'Margham', kind: 'village', x: 1295, y: 1920 },
  { name: 'Dubai Desert\nConservation Reserve', kind: 'reserve', x: 1350, y: 2073 },
  { name: 'Ash', kind: 'edge', x: 1525, y: 2180 },
  { name: 'Al Faqa’', kind: 'hamlet', x: 1289, y: 2232 },
  { name: 'Al Marmoom Desert\nConservation Reserve', kind: 'reserve', x: 949, y: 2246 },
]

function MapPane() {
  const [query, setQuery] = useState('')

  return (
    <main className="relative min-w-0 flex-1 overflow-hidden bg-[#f4f4f4]">
      <Coastline />
      {places.map((place) => (
        <span
          key={place.name}
          style={{ left: place.x, top: place.y }}
          className={`absolute -translate-y-1/2 text-center leading-[30px] whitespace-pre [text-shadow:0_0_3px_#eef1f3,2px_0_1px_#e6eaed,-2px_0_1px_#e6eaed,0_2px_1px_#e6eaed,0_-2px_1px_#e6eaed] ${placeKinds[place.kind]}`}
        >
          {place.name}
        </span>
      ))}
      <span className="absolute right-0 bottom-[109px] text-[25px] leading-[30px] text-[#5f656d] [text-shadow:0_0_3px_#eef1f3]">eb</span>
      <span style={{ left: 414, top: 1733 }} className="absolute -translate-x-1/2 -translate-y-1/2 text-[28px] leading-8 font-bold text-white">
        4
      </span>

      <section className="absolute top-[34px] left-[34px] w-[572px] rounded-[8px] bg-[#fafbfd] px-[34px] pt-[22px] pb-[34px] shadow-[0_2px_5px_rgba(0,0,0,0.35)]">
        <h1 className="text-[34px] leading-10 font-medium text-[#1d252d]">Container Intelligence</h1>
        <div className="mt-[18px] flex h-[70px] items-center rounded-[8px] border-2 border-[#d0d2d4] bg-white pr-[12px] pl-[18px]">
          <input
            type="search"
            aria-label="Search terminals, ports, vessels"
            placeholder="Search terminals, ports, vessels"
            value={query}
            onChange={(e) => setQuery(e.target.value)}
            className="min-w-0 flex-1 bg-transparent text-[28px] leading-8 text-[#1d252d] outline-none placeholder:text-[#a6a9ab]"
          />
          <button type="button" aria-label="Search" className="text-[#667480]">
            <Search className="h-9 w-9" strokeWidth={2.6} />
          </button>
        </div>
      </section>

      <ul className="absolute bottom-[53px] left-[52px] flex flex-col items-start gap-3">
        {totals.map((t) => (
          <li key={t.label} className="flex h-12 items-center rounded-full border-2 border-[#d3d7db] bg-[#fafbfd] px-[14px] text-[26px] font-medium text-[#0a0a0a]">
            <span>
              <b className="font-bold">{t.count}</b> {t.label}
            </span>
          </li>
        ))}
      </ul>

      <div className="absolute right-[21px] bottom-[58px] flex w-[72px] flex-col rounded-[9px] border-4 border-[#98a4ac] bg-white">
        <button type="button" aria-label="Zoom in" className="flex h-16 items-center justify-center border-b-2 border-[#ccc] pt-2">
          <svg viewBox="0 0 26 26" className="h-[26px] w-[26px]" aria-hidden="true">
            <path d="M0 13H26M13 0V26" stroke="#000" strokeWidth="5" />
          </svg>
        </button>
        <button type="button" aria-label="Zoom out" className="flex h-16 items-center justify-center pt-2">
          <svg viewBox="0 0 26 26" className="h-[26px] w-[26px]" aria-hidden="true">
            <path d="M0 13H26" stroke="#000" strokeWidth="5" />
          </svg>
        </button>
      </div>

      <p className="absolute right-0 bottom-0 h-9 bg-white/80 px-[10px] font-['Liberation_Sans',sans-serif] text-[27px] leading-[34px] whitespace-nowrap text-[#333]">
        <a href="#leaflet" className="text-[#283b7c]">Leaflet</a> | © <a href="#mapbox" className="text-[#283b7c]">Mapbox</a> ©{' '}
        <a href="#osm" className="text-[#283b7c]">OpenStreetMap</a>
      </p>
    </main>
  )
}

/* ---------- vessel panel ---------- */

function VesselHeader() {
  return (
    <header>
      <div className="flex h-[85px] items-end justify-between border-b-2 border-[#e1e4e7] bg-[#fafbfd] pr-[6px] pl-[10px]">
        <div className="-mb-[2px] flex h-[74px] items-center rounded-t-[8px] border-2 border-b-0 border-[#e6eaed] bg-white pr-[24px] pl-[16px]">
          <MdDirectionsBoat className="h-[31px] w-[31px] text-[#1d252d]" />
          <span className="ml-2 text-[28px] text-[#1d252d]">W KITHIRA</span>
          <button type="button" aria-label="Close tab" className="ml-4 text-[#6a7680]">
            <X className="h-8 w-8" strokeWidth={2} />
          </button>
        </div>
        <button type="button" aria-label="Close panel" className="mb-4 text-[#6a7680]">
          <X className="h-12 w-12" strokeWidth={2.2} />
        </button>
      </div>

      <div className="mt-[30px] flex h-[43px] items-center gap-[19px] pl-[27px]">
        <h2 className="text-[34px] font-medium text-[#1d252d]">W KITHIRA</h2>
        <a href="#vessel" className="flex h-[43px] items-center gap-[13px] rounded-full bg-[#e3e3e5] pr-2 pl-[13px] text-[26px] font-medium text-[#0a0a0a]">
          Vessel details
          <ArrowUpRight className="h-[30px] w-[30px]" strokeWidth={3} />
        </a>
      </div>

      <div className="mt-[38px] flex pl-[43px] text-[26px] leading-[34px]">
        <dl className="w-[686px]">
          <dt className="flex items-center gap-[10px] text-[#56585e]">
            <BoxIcon />
            Capacity (TEU)
          </dt>
          <dd className="font-medium text-[#1d252d]">6,802</dd>
        </dl>
        <dl>
          <dt className="flex items-center gap-[11px] text-[#56585e]">
            <FaCalendar className="h-[26px] w-[23px]" />
            Carriers &amp; Services
          </dt>
          <dd className="mt-[5px] ml-[3px] flex gap-[10px]">
            {services.map((s) => (
              <span key={s.carrier} className="flex h-[42px] items-center rounded-[12px] border-2 border-[#d6d7d8] px-[14px] text-[#0a0a0a]">
                <span>
                  <b className="font-medium">{s.carrier}:</b> {s.code}
                </span>
              </span>
            ))}
          </dd>
        </dl>
      </div>

      <nav className="mt-[28px] flex border-b-2 border-[#e4e6e9]">
        <button type="button" className="h-[88px] w-[137px] border-b-4 border-[#3b4049] pt-[3px] pr-[3px] text-[28px] font-medium text-[#3b4049]">
          Calls
        </button>
      </nav>
    </header>
  )
}

function CallsTable() {
  const head = 'h-[70px] border-b-2 border-[#e5e9ed] px-[22px] font-medium text-[#6b7480]'
  const cell = 'h-[61px] border-b-2 border-[#e5e9ed] px-[18px]'

  return (
    <table className="w-full table-fixed border-separate border-spacing-0 text-left text-[28px] leading-[38px] text-[#1d252d]">
      <colgroup>
        <col className="w-[256px]" />
        <col className="w-[534px]" />
        <col className="w-[213px]" />
        <col className="w-[280px]" />
        <col className="w-[168px]" />
        <col className="w-[170px]" />
        <col className="w-[278px]" />
        <col />
      </colgroup>
      <thead>
        <tr>
          <th className={`${head} border-r-2`}>Port</th>
          <th className={head}>Terminal</th>
          <th className={head}>Status</th>
          <th className={head}>
            <button type="button" className="flex items-center gap-[18px]">
              At Berth
              <ArrowDown className="h-[34px] w-[34px]" strokeWidth={2} />
            </button>
          </th>
          <th className={`${head} text-right`}>Wait</th>
          <th className={`${head} text-right`}>Stay</th>
          <th className={head}>Wait start</th>
          <th className={head}>Departure</th>
        </tr>
      </thead>
      <tbody>
        {calls.map((call, i) => {
          const past = call.status === 'Departed'
          const time = past ? 'font-medium' : 'text-[29px] italic'
          return (
            <tr key={i} className={past ? 'bg-white' : 'bg-[#f4f7fd]'}>
              <td className={`${cell} border-r-2 bg-white py-[10px] font-medium`}>
                <a href="#port" className="block text-[#1a6dcc]">{call.port}</a>
              </td>
              <td className={`${cell} pr-2 leading-[42px]`}>
                <a href="#terminal" className="block pt-[9px] pb-[8px] text-[#1a6dcc]">{call.terminal}</a>
              </td>
              <td className={`${cell} font-medium`}>{call.status}</td>
              <td className={`${cell} ${time}`}>{call.berth}</td>
              <td className={`${cell} text-right`}>{call.wait}</td>
              <td className={`${cell} text-right`}>{call.stay}</td>
              <td className={`${cell} font-medium`}>{call.waitStart}</td>
              <td className={`${cell} ${time}`}>{call.departure}</td>
            </tr>
          )
        })}
      </tbody>
    </table>
  )
}

function VesselPanel() {
  return (
    <aside className="flex w-[57.2%] shrink-0 flex-col bg-white">
      <VesselHeader />
      <div className="flex h-[87px] shrink-0 items-center justify-end border-b-2 border-[#e5e8ea] bg-[#fafbfd] pr-[20px] text-[28px] font-medium text-[#3b4049]">
        <button type="button" className="flex items-center gap-[15px]">
          <MdFilterList className="h-[50px] w-[50px]" />
          Filters
        </button>
        <button type="button" className="ml-[35px] flex items-center gap-[18px]">
          <ExportIcon />
          Export
        </button>
      </div>
      <div className="min-h-0 flex-1">
        <CallsTable />
      </div>
      <div className="flex h-[112px] shrink-0 items-center justify-end border-t-2 border-[#e5e8ea] pr-[34px] text-[28px] font-medium text-[#1d252d]">
        Total Rows: {calls.length}
      </div>
      <footer className="flex h-[78px] shrink-0 items-center gap-[15px] border-t-2 border-[#e5e8ea] pl-[17px] text-[26px] text-[#4d5560]">
        <RefreshCw className="h-[28px] w-[28px]" strokeWidth={2.4} />
        Last refreshed: 12 minutes ago
      </footer>
    </aside>
  )
}

export default function App() {
  return (
    <div className="flex h-screen w-full overflow-hidden bg-white font-[Roboto,sans-serif]">
      <Sidebar />
      <MapPane />
      <VesselPanel />
    </div>
  )
}
